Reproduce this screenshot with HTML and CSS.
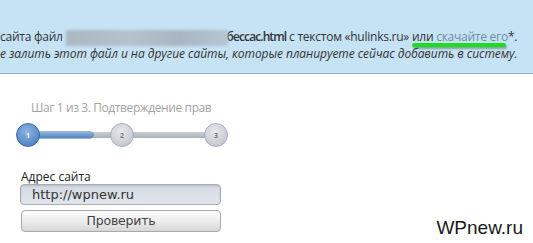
FILE: index.html
```html
<!DOCTYPE html>
<html lang="ru">
<head>
<meta charset="utf-8">
<link rel="stylesheet" href="styles.css">
</head>
<body>
<div class="notice">
  <p class="line">сайта файл <span class="blur"></span><b class="file">бессас.html</b> с текстом «hulinks.ru» <span class="mark">или <a class="link">скачайте его</a></span>*.</p>
  <p class="line italic">е залить этот файл и на другие сайты, которые планируете сейчас добавить в систему.</p>
</div>
<div class="main">
  <div class="step">Шаг 1 из 3. Подтверждение прав</div>
  <div class="progress">
    <div class="track"><div class="fill"></div></div>
    <div class="dot active">1</div>
    <div class="dot">2</div>
    <div class="dot">3</div>
  </div>
  <form class="form">
    <label class="label">Адрес сайта</label>
    <div class="input">http://wpnew.ru</div>
    <div class="button">Проверить</div>
  </form>
  <div class="brand">WPnew.ru</div>
</div>
</body>
</html>
```
FILE: styles.css
```css
html, body {
  margin: 0;
  padding: 0;
  background: #fff;
  width: 533px;
  height: 243px;
  overflow: hidden;
}
.notice {
  height: 74px;
  background: #c6e2f5;
  border-bottom: 1px solid #8db3ce;
  box-sizing: border-box;
  padding-top: 29px;
  font-family: "Open Sans", sans-serif;
  font-size: 12px;
  color: #333;
  letter-spacing: -0.25px;
}
.line {
  margin: 0;
  line-height: 16px;
  white-space: nowrap;
}
.italic {
  font-style: italic;
  letter-spacing: -0.05px;
}
.file {
  font-weight: 600;
  letter-spacing: -0.9px;
}
.blur {
  display: inline-block;
  vertical-align: -5px;
  width: 162px;
  height: 16px;
  margin-right: -1px;
  background: linear-gradient(90deg, #a9b8c3 0%, #b3c2cd 40%, #a7b6c2 70%, #b6c6d2 100%);
  filter: blur(1.5px);
}
.mark {
  position: relative;
}
.mark::after {
  content: "";
  position: absolute;
  left: 0;
  right: 2px;
  bottom: -2px;
  height: 4px;
  background: #1fdc1f;
  border-radius: 2px;
  box-shadow: 1px 2px 2px rgba(0, 60, 0, 0.35);
}
.link {
  color: #6e8ea6;
}
.main {
  position: relative;
  height: 168px;
  font-family: "Open Sans", sans-serif;
}
.step {
  padding: 25px 0 0 31px;
  font-size: 12px;
  letter-spacing: -0.4px;
  line-height: 18px;
  color: #a3a3a3;
}
.progress {
  position: relative;
  margin: 6px 0 0 16px;
  width: 212px;
  height: 24px;
  display: flex;
  justify-content: space-between;
}
.track {
  position: absolute;
  left: 12px;
  right: 12px;
  top: 9px;
  height: 6px;
  border-radius: 3px;
  background: linear-gradient(#c9cfd6, #a9b1ba);
}
.fill {
  width: 65px;
  height: 6px;
  border-radius: 3px;
  background: linear-gradient(#8fb3dc, #4f83c0);
  box-shadow: 0 0 0 0.5px #3f6ea8;
}
.dot {
  position: relative;
  width: 24px;
  height: 24px;
  border-radius: 50%;
  box-sizing: border-box;
  background: radial-gradient(circle at 45% 35%, #e6e9ee 0%, #c7ccd4 70%, #aeb4bd 100%);
  border: 1px solid #a9afb8;
  font-size: 7px;
  font-weight: bold;
  color: #777;
  display: flex;
  align-items: center;
  justify-content: center;
}
.dot.active {
  background: radial-gradient(circle at 45% 35%, #8fb4e2 0%, #5b8cc8 65%, #3f6dab 100%);
  border-color: #3f6aa6;
  color: #fff;
}
.form {
  margin: 22px 0 0 20px;
  width: 201px;
  display: flex;
  flex-direction: column;
}
.label {
  font-size: 12px;
  line-height: 15px;
  color: #222;
  padding-left: 1px;
}
.input {
  height: 21px;
  box-sizing: border-box;
  border: 1px solid #a4adb7;
  border-radius: 4px;
  background: linear-gradient(#d3dae3, #e1e6ec);
  box-shadow: inset 0 1px 2px rgba(0, 0, 0, 0.15);
  padding-left: 11px;
  font-family: "DejaVu Sans", sans-serif;
  font-size: 13px;
  line-height: 19px;
  color: #333;
}
.button {
  margin-top: 5px;
  margin-left: 1px;
  height: 22px;
  box-sizing: border-box;
  border: 1px solid #a9a9a9;
  border-radius: 4px;
  background: linear-gradient(#fdfdfd, #e9e9e9 60%, #d6d6d6);
  text-align: center;
  font-family: "DejaVu Sans", sans-serif;
  font-size: 12.5px;
  letter-spacing: -0.2px;
  line-height: 20px;
  color: #444;
}
.brand {
  position: absolute;
  right: 10px;
  bottom: 3px;
  font-family: "Liberation Sans", sans-serif;
  font-size: 19px;
  color: #1a1a1a;
}
```
